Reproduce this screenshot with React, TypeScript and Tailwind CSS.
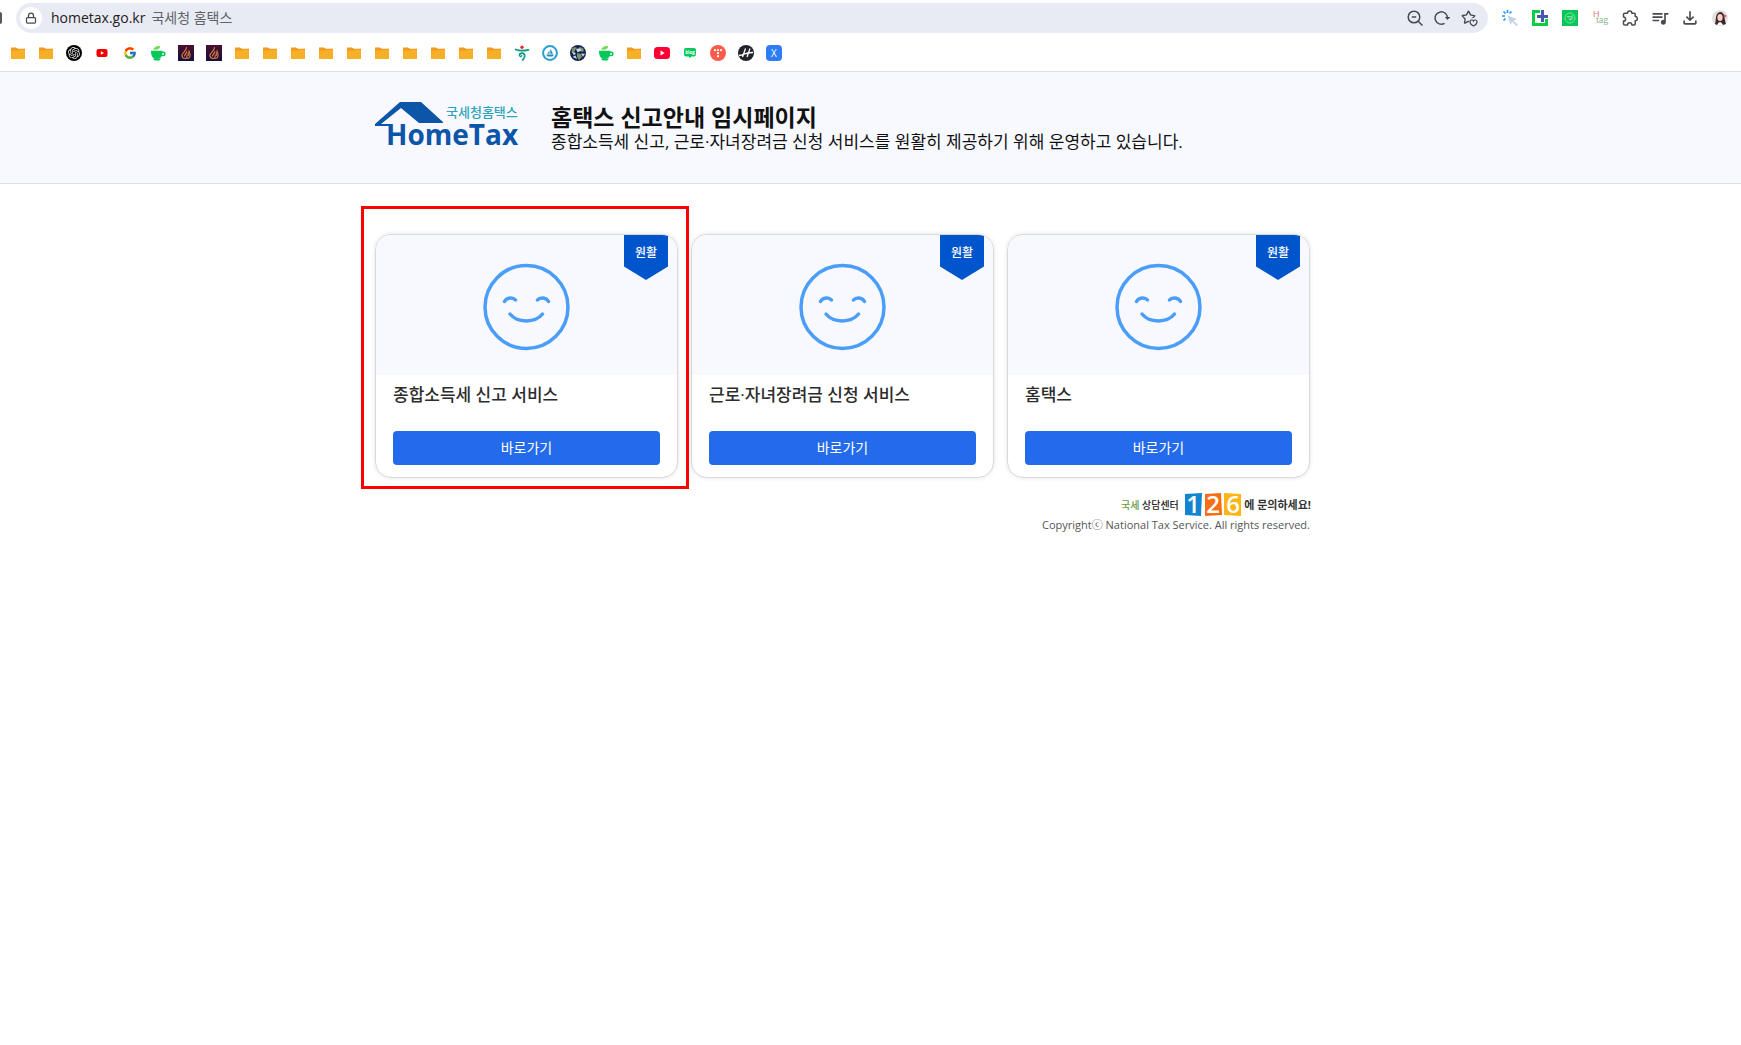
import React from 'react';
import { Lock, Star } from 'lucide-react';
import { FcGoogle } from 'react-icons/fc';
import { SiOpenai } from 'react-icons/si';
import { MdOutlineFileDownload, MdOutlineQueueMusic } from 'react-icons/md';

const icon = 'block h-4 w-4';

const Folder = () => (
  <svg viewBox="0 0 16 16" className={icon}>
    <path d="M6 3h9v4H6z" fill="#fbe3bd" />
    <path d="M1 2.500h5l2 1.500h7V8H1z" fill="#f39a1f" />
    <path d="M1 5.700h5.500L8 5h7v8.500q0 .5-.5.5h-13q-.5 0-.5-.5z" fill="#f5b027" />
  </svg>
);

const Gpt = () => (
  <span className="flex h-4 w-4 items-center justify-center rounded-full bg-black text-gray-200">
    <SiOpenai size={12} />
  </span>
);

const SmallYoutube = () => (
  <svg viewBox="0 0 16 16" className={icon}>
    <rect x="2.500" y="4" width="11" height="8" rx="2" fill="#f00000" />
    <path d="M6.800 6.200v3.600L10 8z" fill="#fff" />
  </svg>
);

const Youtube = () => (
  <svg viewBox="0 0 16 16" className={icon}>
    <rect x="0" y="2" width="16" height="12" rx="3.500" fill="#ff0033" />
    <path d="M6.500 5.500v5L10.800 8z" fill="#fff" />
  </svg>
);

const Google = () => (
  <span className="flex h-4 w-4 items-center justify-center">
    <FcGoogle size={14} />
  </span>
);

const Cup = () => (
  <svg viewBox="0 0 16 16" className={icon}>
    <path d="M3.500 4.500C4 1.800 7 .6 10.300 1c-.3 2.700-2.800 4.200-6.800 3.500z" fill="#6fdb49" />
    <path d="M1 5.800h11.500c0 5-1.500 8.200-5.800 8.200S1 10.800 1 5.800z" fill="#07c75b" />
    <path d="M12 7.300h1.300a1.500 1.500 0 0 1 0 3.200H11" fill="none" stroke="#07c75b" strokeWidth="1.600" />
    <path d="M3 13.500h8L9.500 15.500h-5z" fill="#07c75b" />
  </svg>
);

const Flame = () => (
  <svg viewBox="0 0 16 16" className={icon}>
    <defs>
      <linearGradient id="flame-bg" x1="0" y1="0" x2="0" y2="1">
        <stop offset="0" stopColor="#4b0f2b" />
        <stop offset="1" stopColor="#10123f" />
      </linearGradient>
    </defs>
    <rect width="16" height="16" fill="url(#flame-bg)" />
    <g fill="none" stroke="#d5763f" strokeWidth="1.200" strokeLinecap="round">
      <path d="M8.500 2.500C8.500 6 4 7.500 4 10.500c0 2 1.400 3 3 3 1.800 0 2.300-1.800 2-3.500" />
      <path d="M11 5.500c0 2 1.500 3 1 5.500-.3 1.700-1.500 2.500-3 2.500" />
      <path d="M8.800 6.500C8.800 8.500 6.500 9 6.500 11M10.300 7.500v3" />
    </g>
  </svg>
);

const Dancer = () => (
  <svg viewBox="0 0 16 16" className={icon}>
    <circle cx="8" cy="2.200" r="1.700" fill="#ed2b24" />
    <g fill="none" stroke="#0b9b83" strokeLinecap="round">
      <path d="M1.500 4.500c3.500 1.300 8 1.500 13 .3" strokeWidth="1.700" />
      <path d="M5.500 10.500c.3-3.200 5.300-3 5.200.3-.1 2.200-1.200 3.500-2 4.200" strokeWidth="1.700" />
      <path d="M6 11.500c1 .5 1.800-.2 1.800-1.200" strokeWidth="1.200" />
    </g>
  </svg>
);

const Boat = () => (
  <svg viewBox="0 0 16 16" className={icon}>
    <circle cx="8" cy="8" r="6.900" fill="#fff" stroke="#249fce" strokeWidth="2" />
    <path d="M8.300 3.500 11 8.800H8.300zM7.500 5.500v3.300H5.300zM4 9.600h8l-1.500 2h-5z" fill="#2489bd" />
  </svg>
);

const Globe = () => (
  <svg viewBox="0 0 16 16" className={icon}>
    <circle cx="8" cy="8" r="8" fill="#15244d" />
    <path d="M2 3.500 5 2l2 1-2 2-1 3-2.500-.5zM9 2l4 1 1 3-2 1-2-2zM7 8l4 1 1 3-3 3-2-3z" fill="#78936d" />
    <path d="m2 7 4 1-2 2.500zM6 4l4-.8 1.500 2.500-4 1.500zM11 8.500l4 .2-2 3zM2.500 12l3-1.500L7 14z" fill="#cad6e7" />
  </svg>
);

const Blog = () => (
  <svg viewBox="0 0 16 16" className={icon}>
    <path d="M4 3h8q2 0 2 2v4.500q0 2-2 2H9.200L8 13.300l-1.200-1.800H4q-2 0-2-2V5q0-2 2-2z" fill="#05c95b" />
    <text x="8" y="9" textAnchor="middle" fontSize="4.500" fontWeight="700" fill="#fff">blog</text>
  </svg>
);

const Tistory = () => (
  <svg viewBox="0 0 16 16" className={icon}>
    <circle cx="8" cy="8" r="8" fill="#ff5a4a" />
    <g fill="#fff">
      <circle cx="5" cy="5.200" r="1.100" />
      <circle cx="8" cy="5.200" r="1.100" />
      <circle cx="11" cy="5.200" r="1.100" />
      <circle cx="8" cy="8.200" r="1.100" />
      <circle cx="8" cy="11.200" r="1.100" />
    </g>
  </svg>
);

const Slashed = () => (
  <svg viewBox="0 0 16 16" className={icon}>
    <circle cx="8" cy="8" r="8" fill="#23232e" />
    <path d="M7.500 3.500 4.500 12M12 3.500 9 12M1 10.500c5-.3 6-3.300 14-3" fill="none" stroke="#fff" strokeWidth="1.300" />
  </svg>
);

const BlueX = () => (
  <span className="flex h-4 w-4 items-center justify-center rounded bg-[#2e7cf6] text-[10px] leading-none text-white">X</span>
);

const folders = (n: number) => Array.from({ length: n }, () => ({ name: '폴더', Icon: Folder }));

const bookmarks = [
  ...folders(2),
  { name: 'ChatGPT', Icon: Gpt },
  { name: 'YouTube', Icon: SmallYoutube },
  { name: 'Google', Icon: Google },
  { name: 'Cafe', Icon: Cup },
  { name: 'Flame', Icon: Flame },
  { name: 'Flame', Icon: Flame },
  ...folders(10),
  { name: 'Dancer', Icon: Dancer },
  { name: 'Boat', Icon: Boat },
  { name: 'Globe', Icon: Globe },
  { name: 'Cafe', Icon: Cup },
  ...folders(1),
  { name: 'YouTube', Icon: Youtube },
  { name: 'Blog', Icon: Blog },
  { name: 'Tistory', Icon: Tistory },
  { name: 'H', Icon: Slashed },
  { name: 'X', Icon: BlueX },
];

const ZoomOutIcon = () => (
  <svg viewBox="0 0 16 16" className={icon} fill="none" stroke="#474b50" strokeWidth="1.500">
    <circle cx="7" cy="7" r="5.800" />
    <path d="M4.800 7h4.400M11.200 11.200l4.300 4.300" />
  </svg>
);

const ReloadIcon = () => (
  <svg viewBox="0 0 16 16" className={icon} fill="none" stroke="#474b50" strokeWidth="1.500">
    <path d="M10.500 13.300A6.200 6.200 0 1 1 13.500 8" />
    <path d="M10.800 7h5.400l-2.700 3z" fill="#474b50" stroke="none" />
  </svg>
);

const StarIcon = () => (
  <span className="relative block h-4 w-4 text-[#474b50]">
    <Star size={15} strokeWidth={2.2} />
    <svg viewBox="0 0 9 9" className="absolute -right-px -bottom-px h-[9px] w-[9px]">
      <circle cx="4.500" cy="4.500" r="4.500" fill="#e8ebf3" />
      <path d="M4.500 8C2 6.800 1 5.500 1 4q0-2 1.800-2Q4 2 4.500 3 5 2 6.200 2 8 2 8 4c0 1.500-1 2.800-3.500 4z" fill="none" stroke="#474b50" strokeWidth="1.200" />
    </svg>
  </span>
);

const Clicker = () => (
  <svg viewBox="0 0 16 16" className={icon}>
    <g stroke="#2b95f5" strokeWidth="1.700">
      <path d="M5.500 0v3M1.500 1.500l2 2M0 6h3M1.500 10.500l2-2M9.500 1.500l-2 2" />
    </g>
    <path d="m5.500 5.500 9.500 3.500-3.500 1.700 4.500 4-1.500 1.300-4.300-4.300L8.500 15z" fill="#c4d1e8" />
  </svg>
);

const Capture = () => (
  <svg viewBox="0 0 16 16" className={icon}>
    <path d="M0 0h8v3H3v10h10V9h3v7H0z" fill="#0ccd43" />
    <path d="M9 0h3v5h4v3h-4v4H9V8H5V5h4z" fill="#4758ae" />
  </svg>
);

const Swirl = () => (
  <svg viewBox="0 0 16 16" className={icon}>
    <rect width="16" height="16" fill="#08c757" />
    <g fill="none" stroke="#91e8b5" strokeWidth=".8">
      <circle cx="8" cy="8" r="5" />
      <path d="M5 6.500h4q2 0 2 1.500T9 9.500H7M5.500 8h3M10.500 5 8 11" />
    </g>
  </svg>
);

const HTag = () => (
  <svg viewBox="0 0 16 16" className="block h-4 w-4 overflow-visible">
    <text x="1" y="7" fontSize="9" fill="#f17777" fontFamily="Liberation Sans, sans-serif">H</text>
    <text x="4" y="13" fontSize="10" fill="#87b78c" fontFamily="Liberation Serif, serif">tag</text>
  </svg>
);

const Puzzle = () => (
  <svg viewBox="0 0 16 16" className={icon} fill="none" stroke="#474b50" strokeWidth="1.500" strokeLinejoin="round">
    <path d="M3 3.200h2.500a2.200 2.200 0 0 1 4.400 0h2.300q1 0 1 1v2.400a2.100 2.100 0 0 1 0 4.200V14q0 1-1 1H9.900a2.200 2.200 0 0 0-4.400 0H3q-1.500 0-1.500-1v-2.900a2.100 2.100 0 0 0 0-4.200V4.200q0-1 1.500-1z" />
  </svg>
);

const Avatar = () => (
  <svg viewBox="0 0 16 16" className={icon}>
    <circle cx="8" cy="8" r="8" fill="#e5e1df" />
    <path d="M3 14c1.500-3-.5-11 5-12 5.500 0 4 7 6 12l-3 1H5z" fill="#40282a" />
    <ellipse cx="8" cy="7.500" rx="2.600" ry="3.500" fill="#f3d3c7" />
    <path d="M5 15q3-6 6 0z" fill="#fff" />
    <circle cx="13" cy="6" r="1.300" fill="#de5757" />
  </svg>
);

const extensions = [
  { name: 'Clicker', node: <Clicker /> },
  { name: 'Capture', node: <Capture /> },
  { name: 'Swirl', node: <Swirl /> },
  { name: 'H tag', node: <HTag /> },
  { name: 'Extensions', node: <Puzzle /> },
  { name: 'Media', node: <MdOutlineQueueMusic size={20} /> },
  { name: 'Downloads', node: <MdOutlineFileDownload size={20} /> },
  { name: 'Profile', node: <Avatar /> },
];

const BrowserBar: React.FC = () => (
  <div className="border-b border-[#dfe1e6] pb-[10px]">
    <div className="flex h-9 items-center pr-[13px]">
      <span className="h-3 w-0.5 rounded-r bg-[#55585d]" />
      <div className="ml-[14px] flex h-[30px] flex-1 items-center rounded-full bg-[#e8ebf3] pr-[11px] pl-1">
        <button aria-label="사이트 정보" className="flex h-[22px] w-[22px] items-center justify-center rounded-full bg-white text-[#474b50]">
          <Lock size={12} strokeWidth={2.5} />
        </button>
        <a href="#" className="ml-[9px] flex flex-1 gap-1.5 text-sm leading-5 text-[#1f2023]">
          <span>hometax.go.kr</span>
          <span className="text-[#5f6368]">국세청 홈택스</span>
        </a>
        <div className="flex items-center gap-[11px]">
          <button aria-label="축소"><ZoomOutIcon /></button>
          <button aria-label="새로고침"><ReloadIcon /></button>
          <button aria-label="즐겨찾기"><StarIcon /></button>
        </div>
      </div>
      <div className="ml-[14px] flex items-center gap-[14px] text-[#474b50]">
        {extensions.map(({ name, node }) => (
          <button key={name} aria-label={name} className="flex h-4 w-4 items-center justify-center">
            <span className="shrink-0">{node}</span>
          </button>
        ))}
      </div>
    </div>
    <nav className="mt-[9px] flex gap-3 px-[10px]">
      {bookmarks.map(({ name, Icon }, i) => (
        <a key={i} href="#" aria-label={name} className="h-4 w-4">
          <Icon />
        </a>
      ))}
    </nav>
  </div>
);

const Logo = () => (
  <svg viewBox="0 0 144 46" className="h-[46px] w-36 shrink-0 overflow-visible" role="img" aria-label="국세청홈택스 HomeTax">
    <path d="M25 0h21l22 20v1H44L26 6 6 22h10v2H0v-2z" fill="#0c55a9" />
    <text x="71" y="15" fontSize="13" fontWeight="500" fill="#2ba3bd">국세청홈택스</text>
    <text x="11" y="43" fontSize="28" fontWeight="700" fill="#0c55a9" fontFamily="Open Sans, sans-serif">HomeTax</text>
  </svg>
);

const Smile = () => (
  <svg viewBox="0 0 88 88" className="h-[88px] w-[88px]" fill="none" stroke="#4a9df8" strokeWidth="3.500" strokeLinecap="round">
    <circle cx="43.500" cy="44" r="41.500" />
    <path d="M21.500 38.500c2.500-4.500 8.500-4.500 11-1.500M54.500 37c2.500-3 8.500-3 11 1.500M27 51c7.500 9.200 25 9.200 32.500 0" />
  </svg>
);

const services = [
  { title: '종합소득세 신고 서비스', status: '원활', highlighted: true },
  { title: '근로·자녀장려금 신청 서비스', status: '원활', highlighted: false },
  { title: '홈택스', status: '원활', highlighted: false },
];

interface ServiceCardProps {
  title: string;
  status: string;
  highlighted: boolean;
}

const ServiceCard: React.FC<ServiceCardProps> = ({ title, status, highlighted }) => (
  <li className="relative min-w-0 flex-1">
    <div className="overflow-hidden rounded-2xl border border-[#d9d9d9] bg-white shadow-[0_0_5px_rgba(0,0,0,0.1)]">
      <div className="relative flex justify-center bg-[#f8f9ff] pt-7 pb-6">
        <Smile />
        <div className="absolute top-0 right-[9px] h-[45px] w-11 bg-[#0055cc] pt-2 text-center text-xs leading-5 font-medium text-white [clip-path:polygon(0_0,100%_0,100%_70%,50%_100%,0_70%)]">
          {status}
        </div>
      </div>
      <div className="px-[17px] pt-2 pb-3">
        <h2 className="text-[17px] leading-6 font-medium text-[#2c2c2c]">{title}</h2>
        <button className="mt-6 h-[34px] w-full rounded bg-[#246beb] text-sm text-white">바로가기</button>
      </div>
    </div>
    {highlighted && (
      <div className="pointer-events-none absolute -top-7 -right-[11px] -bottom-[11px] -left-[14px] z-10 border-3 border-[#ff0000]" />
    )}
  </li>
);

const CallCenter = () => (
  <svg viewBox="0 0 190 24" className="h-6 w-[190px] overflow-visible" role="img" aria-label="국세상담센터 126에 문의하세요!">
    <text x="1" y="16" fontSize="10" fontWeight="500" fill="#659b45">국세</text>
    <text x="22" y="16" fontSize="10" fontWeight="500" fill="#222">상담센터</text>
    <path d="m65 1 17-1-1 23-16-1z" fill="#1284d2" />
    <path d="m85 1 16-1 1 22-17 1z" fill="#fa6d16" />
    <path d="m104 0 17 1v22l-17-1z" fill="#fdb515" />
    <g fontSize="24" fill="#fff" fontFamily="Open Sans, sans-serif" fontWeight="600" textAnchor="middle">
      <text x="73" y="20">1</text>
      <text x="93" y="20">2</text>
      <text x="113" y="20">6</text>
    </g>
    <text x="191" y="16" fontSize="11" fontWeight="700" fill="#333" textAnchor="end">에 문의하세요!</text>
  </svg>
);

export default function App() {
  return (
    <div className="min-h-screen bg-white font-['Open_Sans','Noto_Sans_CJK_KR',sans-serif] text-[#111]">
      <BrowserBar />
      <header className="border-b border-[#dfe0e4] bg-[#f8f9ff]">
        <div className="mx-auto flex max-w-[991px] gap-8 pt-[30px] pb-[31px]">
          <Logo />
          <div>
            <h1 className="text-[23px] leading-[30px] font-bold">홈택스 신고안내 임시페이지</h1>
            <p className="text-[17px] leading-5">종합소득세 신고, 근로·자녀장려금 신청 서비스를 원활히 제공하기 위해 운영하고 있습니다.</p>
          </div>
        </div>
      </header>
      <main className="mx-auto max-w-[991px] pt-[50px] pr-14">
        <ul className="flex gap-[13px]">
          {services.map((service) => (
            <ServiceCard key={service.title} {...service} />
          ))}
        </ul>
        <footer className="mt-[15px] flex flex-col items-end">
          <CallCenter />
          <p className="text-[11px] leading-4 text-[#555]">Copyrightⓒ National Tax Service. All rights reserved.</p>
        </footer>
      </main>
    </div>
  );
}
